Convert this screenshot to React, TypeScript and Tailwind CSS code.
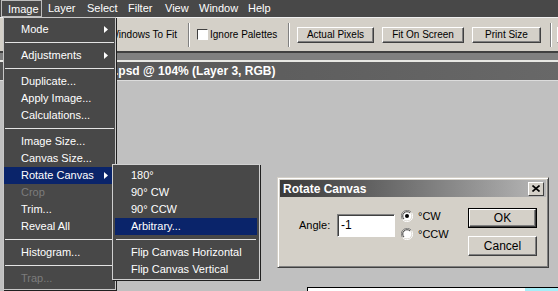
const menuBar = [
  { label: "Image", w: "w-[41px]", open: true },
  { label: "Layer", w: "w-[39px]" },
  { label: "Select", w: "w-[41px]" },
  { label: "Filter", w: "w-[37px]" },
  { label: "View", w: "w-[34px]" },
  { label: "Window", w: "w-[49px]" },
  { label: "Help", w: "w-[38px]" },
];

type Item = { label?: string; sep?: boolean; sub?: boolean; off?: boolean; on?: boolean };

const imageMenu: Item[] = [
  { label: "Mode", sub: true },
  { sep: true },
  { label: "Adjustments", sub: true },
  { sep: true },
  { label: "Duplicate..." },
  { label: "Apply Image..." },
  { label: "Calculations..." },
  { sep: true },
  { label: "Image Size..." },
  { label: "Canvas Size..." },
  { label: "Rotate Canvas", sub: true, on: true },
  { label: "Crop", off: true },
  { label: "Trim..." },
  { label: "Reveal All" },
  { sep: true },
  { label: "Histogram..." },
  { sep: true },
  { label: "Trap...", off: true },
];

const rotateMenu: Item[] = [
  { label: "180°" },
  { label: "90° CW" },
  { label: "90° CCW" },
  { label: "Arbitrary...", on: true },
  { sep: true },
  { label: "Flip Canvas Horizontal" },
  { label: "Flip Canvas Vertical" },
];

function Arrow() {
  return (
    <svg width="4" height="7" viewBox="0 0 4 7" className="absolute right-[7px] top-[5px]">
      <path d="M0 0 L4 3.5 L0 7 Z" fill="#ffffff" />
    </svg>
  );
}

function MenuRows({ items, pl }: { items: Item[]; pl: string }) {
  return (
    <>
      {items.map((it, i) =>
        it.sep ? (
          <div key={i} className="h-[9px] flex items-center px-[1px]">
            <div className="h-px w-full bg-[#e4e4e4]" />
          </div>
        ) : (
          <div
            key={i}
            className={`relative h-[17px] leading-[17px] whitespace-nowrap ${pl} ${
              it.on ? "bg-[#0a246a] text-white" : it.off ? "text-[#7c7c7c]" : "text-white"
            }`}
          >
            {it.label}
            {it.sub && <Arrow />}
          </div>
        )
      )}
    </>
  );
}

function Btn({ w, h, children, def }: { w: string; h: string; children?: React.ReactNode; def?: boolean }) {
  const inner = (
    <div
      className={`flex items-center justify-center shrink-0 whitespace-nowrap ${def ? "w-full h-full" : `${w} ${h}`} bg-[#d4d0c8] border border-t-white border-l-white border-r-[#404040] border-b-[#404040] shadow-[inset_-1px_-1px_0_#808080] text-black`}
    >
      {children}
    </div>
  );
  if (def) return <div className={`${w} ${h} border border-black`}>{inner}</div>;
  return inner;
}

function Sep() {
  return <div className="w-[2px] h-[24px] shrink-0 border-l border-l-[#808080] border-r border-r-white" />;
}

function Radio({ checked }: { checked?: boolean }) {
  return (
    <svg width="12" height="12" viewBox="0 0 12 12">
      <path d="M10.5 2.5 A5.5 5.5 0 0 0 1.5 9.5" fill="none" stroke="#808080" />
      <path d="M1.5 9.5 A5.5 5.5 0 0 0 10.5 2.5" fill="none" stroke="#ffffff" />
      <circle cx="6" cy="6" r="4.5" fill="#ffffff" />
      <path d="M9 3 A4.2 4.2 0 0 0 3 9" fill="none" stroke="#404040" />
      {checked && <circle cx="6" cy="6" r="2" fill="#000000" />}
    </svg>
  );
}

export default function App() {
  return (
    <div className="relative w-[558px] h-[291px] overflow-hidden bg-[#c0c0c0] font-['Liberation_Sans',Arial,sans-serif] text-[11px] flex flex-col">
      {/* menu bar */}
      <div className="h-[17px] bg-[#484848] flex text-white shrink-0">
        {menuBar.map((m) => (
          <div
            key={m.label}
            className={`${m.w} shrink-0 h-[17px] leading-[16px] pl-[6px] ${m.open ? "ml-[1px] border border-[#bdbdbd] pl-[5px] leading-[15px]" : ""}`}
          >
            {m.label}
          </div>
        ))}
      </div>

      {/* options bar */}
      <div className="h-[36px] shrink-0 bg-[#d4d0c8] border-t border-t-[#f0f0f0] border-b-2 border-b-[#404040] flex items-center text-[10px] text-black overflow-hidden">
        <div className="w-[177px] shrink-0 flex justify-end whitespace-nowrap">Resize Windows To Fit</div>
        <div className="ml-[11px] shrink-0"><Sep /></div>
        <div className="ml-[7px] shrink-0 w-[11px] h-[11px] bg-white border border-t-[#404040] border-l-[#404040] border-r-white border-b-white" />
        <div className="ml-[2px] shrink-0 w-[78px] whitespace-nowrap">Ignore Palettes</div>
        <Sep />
        <div className="ml-[7px] shrink-0"><Btn w="w-[77px]" h="h-[16px]">Actual Pixels</Btn></div>
        <div className="ml-[8px] shrink-0"><Btn w="w-[82px]" h="h-[16px]">Fit On Screen</Btn></div>
        <div className="ml-[8px] shrink-0"><Btn w="w-[69px]" h="h-[16px]">Print Size</Btn></div>
        <div className="ml-[9px] shrink-0"><Sep /></div>
        <div className="ml-[5px] shrink-0"><Btn w="w-[40px]" h="h-[16px]" /></div>
      </div>

      <div className="h-[7px] shrink-0 bg-[#808080]" />
      <div className="h-[2px] shrink-0 bg-[#e8e8e4]" />

      {/* document title */}
      <div className="h-[19px] shrink-0 bg-gradient-to-r from-[#545454] to-[#686868] border-b border-b-[#dcdcdc] text-white font-bold text-[12px] leading-[18px] pl-[115px] whitespace-nowrap">
        .psd @ 104% (Layer 3, RGB)
      </div>

      {/* canvas area */}
      <div className="flex-1 pl-[307px] pt-[206px] flex">
        <div className="flex-1 border-t border-l border-black bg-white flex">
          <div className="w-[217px]" />
          <div className="flex-1 bg-[#a6eef8]" />
        </div>
      </div>

      {/* Image menu */}
      <div className="absolute left-[3px] top-[17px] w-[113px] bg-[#484848] border border-[#c8c8c8] shadow-[1px_1px_0_#202020] pt-[3px] pb-[2px]">
        <MenuRows items={imageMenu} pl="pl-[17px]" />
      </div>

      {/* Rotate Canvas submenu */}
      <div className="absolute left-[112px] top-[164px] w-[148px] bg-[#484848] border border-[#d0d0d0] shadow-[1px_1px_0_#202020] pt-[2px] pb-[1px] px-[2px]">
        <MenuRows items={rotateMenu} pl="pl-[16px]" />
      </div>

      {/* Rotate Canvas dialog */}
      <div className="absolute left-[277px] top-[177px] w-[272px] h-[91px] bg-[#d4d0c8] border border-t-[#d4d0c8] border-l-[#d4d0c8] border-r-[#404040] border-b-[#404040] shadow-[inset_1px_1px_0_#ffffff,inset_-1px_-1px_0_#808080] p-[2px] flex flex-col text-black">
        <div className="h-[17px] shrink-0 bg-gradient-to-r from-[#3a3a3a] to-[#b8b8b8] flex items-center justify-between pl-[3px] pr-[2px]">
          <span className="text-white font-bold text-[12px] leading-none">Rotate Canvas</span>
          <div className="w-[16px] h-[14px] bg-[#d4d0c8] border border-t-white border-l-white border-r-[#404040] border-b-[#404040] flex items-center justify-center">
            <svg width="8" height="7" viewBox="0 0 8 7">
              <path d="M0.5 0.5 L7.5 6.5 M7.5 0.5 L0.5 6.5" stroke="#000" strokeWidth="1.6" />
            </svg>
          </div>
        </div>
        <div className="flex-1 flex">
          <div className="mt-[17px] ml-[19px] flex items-center h-[23px]">
            <span className="w-[38px]">Angle:</span>
            <div className="w-[58px] h-[23px] bg-white border border-t-[#808080] border-l-[#808080] border-r-white border-b-white shadow-[inset_1px_1px_0_#404040] pl-[3px] leading-[20px] text-[12px]">
              -1
            </div>
          </div>
          <div className="ml-[6px] mt-[10px] flex flex-col">
            <div className="h-[18px] flex items-center gap-[5px]">
              <Radio checked />
              <span>°CW</span>
            </div>
            <div className="h-[18px] flex items-center gap-[5px]">
              <Radio />
              <span>°CCW</span>
            </div>
          </div>
          <div className="ml-auto mr-[9px] mt-[11px] flex flex-col gap-[8px] text-[12px]">
            <Btn w="w-[69px]" h="h-[20px]" def>OK</Btn>
            <Btn w="w-[69px]" h="h-[20px]">Cancel</Btn>
          </div>
        </div>
      </div>
    </div>
  );
}
